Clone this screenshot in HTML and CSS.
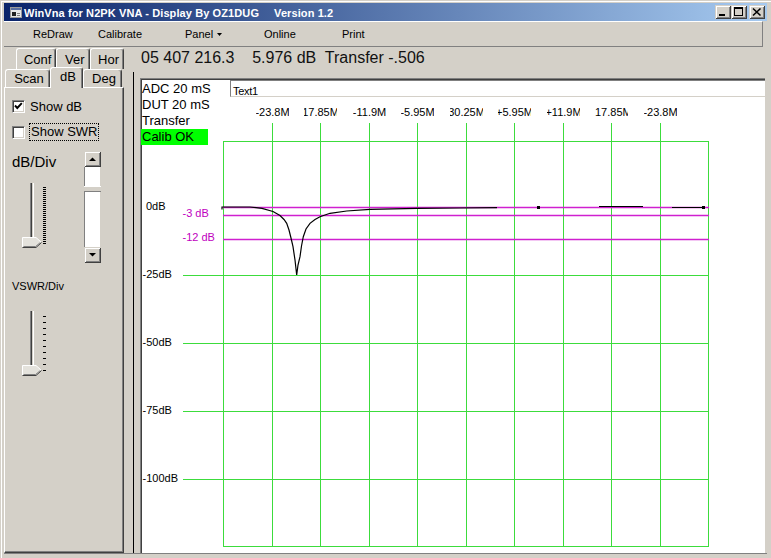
FILE: index.html
```html
<!DOCTYPE html>
<html lang="en">
<head>
  <meta charset="UTF-8">
  <title>WinVna for N2PK VNA</title>
  <link rel="stylesheet" href="styles.css">
</head>
<body>

<div class="win">
  <!-- title bar -->
  <div class="titlebar">
    <svg class="app-icon" width="12" height="11" viewBox="0 0 12 11">
      <rect x="0.5" y="0.5" width="11" height="10" fill="#e8e8e8" stroke="#9a9a9a"/>
      <rect x="1" y="1" width="10" height="2" fill="#5a6fa0"/>
      <path d="M2 5h4v4H2z" fill="#202020"/>
      <path d="M7 6h3v1H7zM7 8h3v1H7z" fill="#808080"/>
    </svg>
    <span class="title">WinVna for N2PK VNA - Display By OZ1DUG</span>
    <span class="title version">Version 1.2</span>
    <div class="caption-btns">
      <span class="cbtn"><svg width="16" height="14"><rect x="4" y="9" width="6" height="2"/></svg></span>
      <span class="cbtn"><svg width="16" height="14"><rect x="3.5" y="2.5" width="8" height="8" fill="none" stroke="#000"/><rect x="3" y="2" width="9" height="2"/></svg></span>
      <span class="cbtn cbtn-close"><svg width="16" height="14"><path d="M4 3.5L11.5 10.5M11.5 3.5L4 10.5" stroke="#000" stroke-width="1.6"/></svg></span>
    </div>
  </div>

  <!-- menu -->
  <div class="menubar">
    <span class="mi mi-redraw">ReDraw</span>
    <span class="mi mi-calib">Calibrate</span>
    <span class="mi mi-panel">Panel <svg class="drop" width="5" height="3"><path d="M0 0h5L2.5 3z"/></svg></span>
    <span class="mi mi-online">Online</span>
    <span class="mi">Print</span>
  </div>

  <div class="main">
    <!-- left settings panel -->
    <div class="left">
      <div class="tabctl">
        <div class="tab-row back">
          <span class="tab t-conf">Conf</span>
          <span class="tab t-ver">Ver</span>
          <span class="tab t-hor">Hor</span>
        </div>
        <div class="tab-row front">
          <span class="tab t-scan">Scan</span>
          <span class="tab t-db sel">dB</span>
          <span class="tab t-deg">Deg</span>
        </div>
        <div class="tab-body">
          <div class="cb-row r1">
            <span class="cb"><svg width="11" height="11"><path d="M2 4.5L4.3 7L8.8 2.2" fill="none" stroke="#000" stroke-width="1.9"/></svg></span>
            <span class="cb-label">Show dB</span>
          </div>
          <div class="cb-row r2">
            <span class="cb"></span>
            <span class="cb-label focus">Show SWR</span>
          </div>

          <div class="div-sec">
            <div class="div-left">
              <div class="div-label">dB/Div</div>
              <div class="slider">
                <div class="sl-track"></div>
                <div class="sl-ticks"></div>
                <svg class="sl-thumb" width="21" height="11">
                  <path d="M0.5 0.5H14L19.5 5.5L14 10.5H0.5Z" fill="#e4e2dc"/>
                  <path d="M0.5 10V0.5H14L19 5" fill="none" stroke="#fff"/>
                  <path d="M19.5 5.5L14 10.5H0.5" fill="none" stroke="#404040"/>
                  <path d="M18.2 5.6L13.6 9.5H1.5" fill="none" stroke="#808080"/>
                </svg>
              </div>
            </div>
            <div class="vscroll">
              <span class="sb-btn"><svg width="7" height="4"><path d="M0 4h7L3.5 0.5z"/></svg></span>
              <span class="sb-track sb-a"></span>
              <span class="sb-thumb"></span>
              <span class="sb-track"></span>
              <span class="sb-btn"><svg width="7" height="4"><path d="M0 0h7L3.5 3.5z"/></svg></span>
            </div>
          </div>

          <div class="vswr-label">VSWR/Div</div>
          <div class="slider s2">
            <div class="sl-track"></div>
            <div class="sl-ticks"></div>
            <svg class="sl-thumb" width="21" height="11">
              <path d="M0.5 0.5H14L19.5 5.5L14 10.5H0.5Z" fill="#e4e2dc"/>
              <path d="M0.5 10V0.5H14L19 5" fill="none" stroke="#fff"/>
              <path d="M19.5 5.5L14 10.5H0.5" fill="none" stroke="#404040"/>
              <path d="M18.2 5.6L13.6 9.5H1.5" fill="none" stroke="#808080"/>
            </svg>
          </div>
        </div>
      </div>
      <div class="split"><div class="split-line"></div></div>
    </div>

    <!-- readout + plot -->
    <div class="right">
      <div class="status">05 407 216.3    5.976 dB  Transfer -.506</div>
      <div class="chart">
        <svg class="plot" width="624" height="474" viewBox="141 79 624 474">
          <path class="grid" stroke="#3cdc3c" fill="none" d="M223 141.5H709M223 546.5H709M183 275.5H709M183 343.5H709M183 411.5H709M183 479.5H709M223.5 141V547M708.5 141V547M272.5 123V547M320.5 123V547M369.5 123V547M417.5 123V547M466.5 123V547M514.5 123V547M563.5 123V547M611.5 123V547M660.5 123V547"/>
          <path class="ref" stroke="#d020d0" fill="none" d="M223 207.5H709M223 215.5H709M223 239.5H709"/>
          <polyline class="trace" stroke="#000" fill="none" points="222,209.5 222,207 250,207 262,208.3 273,211.5 280,215.5 284,219.5 286.7,223.3 289,230 291,238 293,246.7 295,260 296.7,275 298,265 300,256.7 301.5,246 303.3,236.7 306,229 310,223.3 315,219.5 320,216.7 330,213.3 346.7,211 370,209.3 417,208.3 460,208 497,207.7"/>
          <path class="trace" stroke="#000" fill="none" d="M599 206.5H643M672 207.5H704"/>
          <rect x="537" y="206" width="3" height="3"/>
          <rect x="702" y="206" width="3" height="3"/>

          <text x="146" y="209.5">0dB</text>
          <text x="142.5" y="277.5">-25dB</text>
          <text x="142.5" y="345.5">-50dB</text>
          <text x="142.5" y="413.5">-75dB</text>
          <text x="142.5" y="481.5">-100dB</text>
          <text class="mag" x="182.5" y="216.5">-3 dB</text>
          <text class="mag" x="182.5" y="241">-12 dB</text>

          <svg x="256" y="104" width="33" height="15"><text x="16.5" y="12" text-anchor="middle">-23.8M</text></svg>
          <svg x="304" y="104" width="33" height="15"><text x="16.5" y="12" text-anchor="middle">17.85M</text></svg>
          <svg x="353" y="104" width="33" height="15"><text x="16.5" y="12" text-anchor="middle">-11.9M</text></svg>
          <svg x="401" y="104" width="33" height="15"><text x="16.5" y="12" text-anchor="middle">-5.95M</text></svg>
          <svg x="450" y="104" width="33" height="15"><text x="16.5" y="12" text-anchor="middle">30.25M</text></svg>
          <svg x="498" y="104" width="33" height="15"><text x="16.5" y="12" text-anchor="middle">+5.95M</text></svg>
          <svg x="547" y="104" width="33" height="15"><text x="16.5" y="12" text-anchor="middle">+11.9M</text></svg>
          <svg x="595" y="104" width="33" height="15"><text x="16.5" y="12" text-anchor="middle">-17.85M</text></svg>
          <svg x="644" y="104" width="33" height="15"><text x="16.5" y="12" text-anchor="middle">-23.8M</text></svg>
        </svg>

        <div class="chart-head">
          <div class="info">
            <div>ADC 20 mS</div>
            <div>DUT 20 mS</div>
            <div>Transfer</div>
            <div class="calib">Calib OK</div>
          </div>
          <div class="textbox">Text1</div>
        </div>
      </div>
    </div>
  </div>
</div>

</body>
</html>
```

FILE: styles.css
```css
* {
  box-sizing: border-box;
}

body {
  margin: 0;
  background: #d4d0c8;
  font-family: "Liberation Sans", Arial, sans-serif;
  color: #000;
}

.win {
  width: 771px;
  height: 558px;
  padding: 3px 4px 4px 4px;
  background: #d4d0c8;
  box-shadow: inset 1px 1px #d4d0c8, inset 2px 2px #fff;
  display: flex;
  flex-direction: column;
  overflow: hidden;
}

/* title bar */
.titlebar {
  flex: none;
  height: 18px;
  display: flex;
  align-items: center;
  padding-left: 6px;
  background: linear-gradient(to right, #0a246a, #a6caf0);
  color: #fff;
  font-size: 11px;
  font-weight: bold;
}

.app-icon {
  margin-right: 2px;
}

.title {
  line-height: 13px;
  padding-top: 2px;
  white-space: nowrap;
  letter-spacing: 0.1px;
}

.version {
  margin-left: 15px;
}

.caption-btns {
  margin-left: auto;
  margin-right: 2px;
  display: flex;
}

.cbtn {
  display: block;
  width: 16px;
  height: 14px;
  background: #d4d0c8;
  box-shadow: inset 1px 1px #d4d0c8, inset -1px -1px #404040, inset 2px 2px #fff, inset -2px -2px #808080;
}

.cbtn svg {
  display: block;
}

.cbtn-close {
  margin-left: 2px;
}

/* menu */
.menubar {
  flex: none;
  height: 26px;
  margin-right: 4px;
  display: flex;
  align-items: center;
  padding: 1px 0 0 29px;
  border-top: 1px solid #fff;
  border-bottom: 1px solid #808080;
  border-right: 1px solid #808080;
  font-size: 11px;
  line-height: 13px;
}

.mi {
  display: flex;
  align-items: center;
  white-space: nowrap;
}

.mi-redraw { width: 65px; }
.mi-calib { width: 87px; }
.mi-panel { width: 79px; }
.mi-online { width: 78px; }

.drop {
  margin-left: 4px;
}

.main {
  flex: none;
  height: 507px;
  display: flex;
  border-bottom: 1px solid #808080;
}

/* left tab panel */
.left {
  width: 136px;
  display: flex;
}

.tabctl {
  width: 120px;
  display: flex;
  flex-direction: column;
}

.tab-row {
  flex: none;
  display: flex;
}

.tab-row.back {
  height: 21px;
  margin: 1px 0 0 12px;
}

.tab-row.front {
  height: 18px;
  margin-left: 1px;
  align-items: flex-end;
}

.tab {
  display: block;
  background: #d4d0c8;
  border-top: 1px solid #fff;
  border-left: 1px solid #fff;
  border-right: 1px solid #404040;
  border-radius: 3px 3px 0 0;
  box-shadow: inset -1px 0 #808080;
  font-size: 13px;
  text-align: center;
  padding-left: 3px;
}

.back .tab {
  height: 21px;
  padding-top: 2px;
  line-height: 18px;
}

.front .tab {
  height: 18px;
  padding-top: 1px;
  line-height: 16px;
}

.front .tab.sel {
  height: 21px;
  margin-bottom: -1px;
  position: relative;
  z-index: 1;
}

.t-conf { width: 43px; }
.t-ver { width: 36px; }
.t-hor { width: 36px; }
.t-scan { width: 45px; }
.t-db { width: 33px; }
.t-deg { width: 39px; }

.tab-body {
  flex: 1;
  border-top: 1px solid #fff;
  border-left: 1px solid #fff;
  border-right: 1px solid #404040;
  border-bottom: 1px solid #404040;
  box-shadow: inset -1px -1px #808080;
  padding-left: 7px;
}

.cb-row {
  display: flex;
  align-items: center;
  font-size: 13px;
  line-height: 13px;
}

.cb-row.r1 {
  height: 13px;
  margin-top: 12px;
}

.cb-row.r2 {
  height: 18px;
  margin-top: 10px;
}

.cb {
  flex: none;
  width: 13px;
  height: 13px;
  background: #fff;
  border: 1px solid;
  border-color: #808080 #fff #fff #808080;
  box-shadow: inset 1px 1px #404040, inset -1px -1px #d4d0c8;
}

.cb svg {
  display: block;
}

.cb-label {
  margin-left: 5px;
  white-space: nowrap;
}

.cb-label.focus {
  margin-left: 4px;
  padding: 1px;
  line-height: 14px;
  border: 1px dotted #000;
}

.div-sec {
  display: flex;
  margin-top: 10px;
}

.div-left {
  width: 72px;
}

.div-label {
  font-size: 15px;
  line-height: 17px;
  padding-top: 2px;
}

.slider {
  position: relative;
  width: 24px;
  height: 64px;
  margin: 13px 0 0 10px;
}

.slider.s2 {
  margin-top: 18px;
}

.sl-track {
  position: absolute;
  left: 8px;
  top: 0;
  width: 4px;
  height: 60px;
  border-left: 1px solid #808080;
  border-right: 1px solid #fff;
  box-shadow: inset 1px 0 #404040;
}

.sl-ticks {
  position: absolute;
  left: 21px;
  top: 4px;
  width: 3px;
  height: 57px;
  background: repeating-linear-gradient(to bottom, #000 0 1px, transparent 1px 2px);
}

.s2 .sl-ticks {
  top: 5px;
  height: 55px;
  background: repeating-linear-gradient(to bottom, #000 0 1px, transparent 1px 6px);
}

.sl-thumb {
  position: absolute;
  left: 0;
  top: 54px;
}

.vscroll {
  width: 17px;
  height: 112px;
  display: flex;
  flex-direction: column;
}

.sb-btn {
  flex: none;
  height: 16px;
  display: flex;
  align-items: center;
  justify-content: center;
  background: #d4d0c8;
  box-shadow: inset 1px 1px #d4d0c8, inset -1px -1px #404040, inset 2px 2px #fff, inset -2px -2px #808080;
}

.sb-btn svg {
  display: block;
}

.sb-track {
  flex: 1;
  background: #fff;
  box-shadow: inset 1px 0 #808080, inset -1px 0 #d4d0c8;
}

.sb-track.sb-a {
  flex: none;
  height: 19px;
}

.sb-thumb {
  flex: none;
  height: 6px;
  background: #d4d0c8;
  box-shadow: inset 0 1px #fff, inset 0 -1px #808080;
}

.vswr-label {
  margin-top: 17px;
  font-size: 11px;
  line-height: 13px;
}

.split {
  width: 16px;
  padding-top: 25px;
  display: flex;
  flex-direction: column;
}

.split-line {
  flex: 1;
  width: 1px;
  margin-left: 9px;
  background: #000;
}

/* right side */
.right {
  width: 627px;
  display: flex;
  flex-direction: column;
}

.status {
  flex: none;
  height: 31px;
  padding: 2px 0 0 1px;
  font-size: 16px;
  line-height: 18px;
  white-space: pre;
  color: #111;
}

.chart {
  position: relative;
  width: 625px;
  height: 475px;
  background: #fff;
  border-top: 1px solid #808080;
  border-left: 1px solid #808080;
  box-shadow: inset 1px 1px #404040;
}

.plot {
  position: absolute;
  left: 0;
  top: 0;
}

.plot .ref {
  stroke-width: 1.5;
}

.plot .trace {
  stroke-width: 1.2;
}

.plot text {
  font-family: "Liberation Sans", Arial, sans-serif;
  font-size: 11px;
  fill: #000;
}

.plot text.mag {
  fill: #c000c0;
}

.chart-head {
  position: relative;
  display: flex;
}

.info {
  width: 89px;
  padding: 2px 0 0 1px;
  font-size: 13px;
  line-height: 16px;
  white-space: nowrap;
}

.calib {
  width: 67px;
  margin-left: -1px;
  padding-left: 1px;
  background: #00ff00;
}

.textbox {
  flex: 1;
  height: 17px;
  margin-top: 1px;
  padding: 5px 0 0 2px;
  border-top: 1px solid #808080;
  border-left: 1px solid #808080;
  border-bottom: 1px solid #d4d0c8;
  font-size: 11px;
  line-height: 11px;
  letter-spacing: -0.3px;
  background: #fff;
}
```
